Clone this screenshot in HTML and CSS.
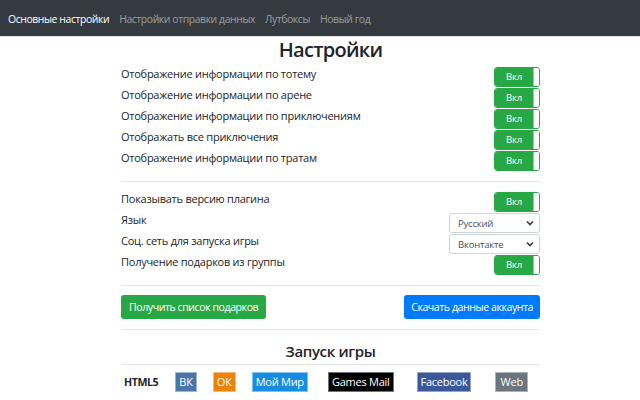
FILE: index.html
```html
<!DOCTYPE html>
<html lang="ru">
<head>
<meta charset="utf-8">
<title>Настройки</title>
<link rel="stylesheet" href="styles.css">
</head>
<body>
<nav class="navbar">
  <a class="nav-link active">Основные настройки</a>
  <a class="nav-link">Настройки отправки данных</a>
  <a class="nav-link">Лутбоксы</a>
  <a class="nav-link">Новый год</a>
</nav>
<main class="container">
  <h1 class="title">Настройки</h1>
  <section class="group">
    <div class="row"><span class="label">Отображение информации по тотему</span><span class="toggle"><span class="toggle-on">Вкл</span><span class="toggle-handle"></span></span></div>
    <div class="row"><span class="label">Отображение информации по арене</span><span class="toggle"><span class="toggle-on">Вкл</span><span class="toggle-handle"></span></span></div>
    <div class="row"><span class="label">Отображение информации по приключениям</span><span class="toggle"><span class="toggle-on">Вкл</span><span class="toggle-handle"></span></span></div>
    <div class="row"><span class="label">Отображать все приключения</span><span class="toggle"><span class="toggle-on">Вкл</span><span class="toggle-handle"></span></span></div>
    <div class="row"><span class="label">Отображение информации по тратам</span><span class="toggle"><span class="toggle-on">Вкл</span><span class="toggle-handle"></span></span></div>
  </section>
  <hr class="divider divider-a">
  <section class="group">
    <div class="row"><span class="label">Показывать версию плагина</span><span class="toggle"><span class="toggle-on">Вкл</span><span class="toggle-handle"></span></span></div>
    <div class="row"><span class="label">Язык</span><span class="select"><span class="select-text">Русский</span><svg class="chev" width="8" height="6" viewBox="0 0 8 6"><path d="M1 1.5 L4 4.5 L7 1.5" fill="none" stroke="#343a40" stroke-width="1.6"/></svg></span></div>
    <div class="row"><span class="label">Соц. сеть для запуска игры</span><span class="select"><span class="select-text">Вконтакте</span><svg class="chev" width="8" height="6" viewBox="0 0 8 6"><path d="M1 1.5 L4 4.5 L7 1.5" fill="none" stroke="#343a40" stroke-width="1.6"/></svg></span></div>
    <div class="row"><span class="label">Получение подарков из группы</span><span class="toggle"><span class="toggle-on">Вкл</span><span class="toggle-handle"></span></span></div>
  </section>
  <hr class="divider divider-b">
  <div class="actions">
    <button class="btn btn-success">Получить список подарков</button>
    <button class="btn btn-primary">Скачать данные аккаунта</button>
  </div>
  <hr class="divider divider-c">
  <h2 class="subtitle">Запуск игры</h2>
  <hr class="divider divider-d">
  <div class="launch">
    <span class="cell cell-start"><b class="html5">HTML5</b></span>
    <span class="cell"><span class="net net-vk">ВК</span></span>
    <span class="cell"><span class="net net-ok">ОК</span></span>
    <span class="cell"><span class="net net-mm">Мой Мир</span></span>
    <span class="cell"><span class="net net-gm">Games Mail</span></span>
    <span class="cell"><span class="net net-fb">Facebook</span></span>
    <span class="cell"><span class="net net-web">Web</span></span>
  </div>
</main>
</body>
</html>
```

FILE: styles.css
```css
* { box-sizing: border-box; }
html, body { margin: 0; padding: 0; background: #fff; }
body {
  font-family: "Open Sans", "Noto Sans", sans-serif;
  font-size: 11px;
  color: #212529;
}
.navbar {
  height: 37px;
  background: #343a40;
  border-bottom: 1px solid #e3e3e3;
  display: flex;
  gap: 10px;
  padding: 11px 8px 0;
}
.nav-link {
  color: rgba(255,255,255,0.5);
  font-size: 10.4px;
  line-height: 17px;
  letter-spacing: -0.4px;
  white-space: nowrap;
}
.nav-link.active { color: #fff; }

.container {
  width: 420px;
  margin: 0 100px 0 120px;
  padding-left: 1px;
}
.title {
  margin: 0 0 4px;
  text-align: center;
  font-size: 20px;
  line-height: 26px;
  font-weight: 600;
  letter-spacing: -0.7px;
}
.group { display: flex; flex-direction: column; }
.row {
  height: 21px;
  display: flex;
  justify-content: space-between;
  align-items: flex-start;
}
.label {
  line-height: 14px;
  letter-spacing: -0.25px;
  color: #212529;
}
.toggle {
  width: 46px;
  height: 20px;
  display: flex;
  border: 1px solid #28a745;
  border-radius: 3px;
  overflow: hidden;
  background: #fff;
}
.toggle-on {
  flex: 1;
  background: #28a745;
  color: #fff;
  font-size: 9.5px;
  line-height: 18px;
  text-align: center;
  letter-spacing: -0.2px;
}
.toggle-handle {
  width: 6px;
  background: #fff;
  border-left: 1px solid #8fd19e;
}
.select {
  width: 91px;
  height: 20px;
  border: 1px solid #ced4da;
  border-radius: 3px;
  display: flex;
  align-items: center;
  justify-content: space-between;
  padding: 0 5px 0 8px;
  color: #495057;
  font-size: 9.5px;
  letter-spacing: -0.2px;
}
.chev { display: block; }

.divider {
  border: 0;
  border-top: 1px solid #e6e6e6;
  margin: 0;
  height: 0;
}
.divider-a { margin: 9px 0 10px; }
.divider-b { margin: 9px 0 9px; }
.divider-c { margin: 10px 0 0; }
.divider-d { margin: 2px 0 7px; }

.actions {
  display: flex;
  justify-content: space-between;
}
.btn {
  height: 24px;
  border: 0;
  border-radius: 3px;
  padding: 0 8px;
  color: #fff;
  font-family: inherit;
  font-size: 10.6px;
  letter-spacing: -0.45px;
  line-height: 24px;
}
.btn-success { background: #28a745; }
.btn-primary { background: #007bff; padding: 0 7px; }

.subtitle {
  margin: 11px 0 0;
  text-align: center;
  font-size: 15px;
  line-height: 21px;
  font-weight: 600;
  letter-spacing: -0.35px;
}
.launch {
  display: grid;
  grid-template-columns: 46px 38px 38.5px 72.5px 89.5px 77px 57.5px;
  align-items: center;
  height: 20px;
}
.cell { display: flex; justify-content: center; }
.cell-start { justify-content: flex-start; padding-left: 3px; }
.html5 { font-weight: 700; font-size: 10.6px; letter-spacing: -0.4px; }
.net {
  display: block;
  height: 20px;
  line-height: 18px;
  padding: 0 3px;
  border: 1px solid rgba(255,255,255,0.45);
  color: #fff;
  font-size: 11px;
  letter-spacing: -0.25px;
}
.net-vk { background: #4a76a8; }
.net-ok { background: #ee8208; }
.net-mm { background: #168de2; }
.net-gm { background: #000; }
.net-fb { background: #3b5998; }
.net-web { background: #6c757d; padding: 0 4px 0 5px; }
```
